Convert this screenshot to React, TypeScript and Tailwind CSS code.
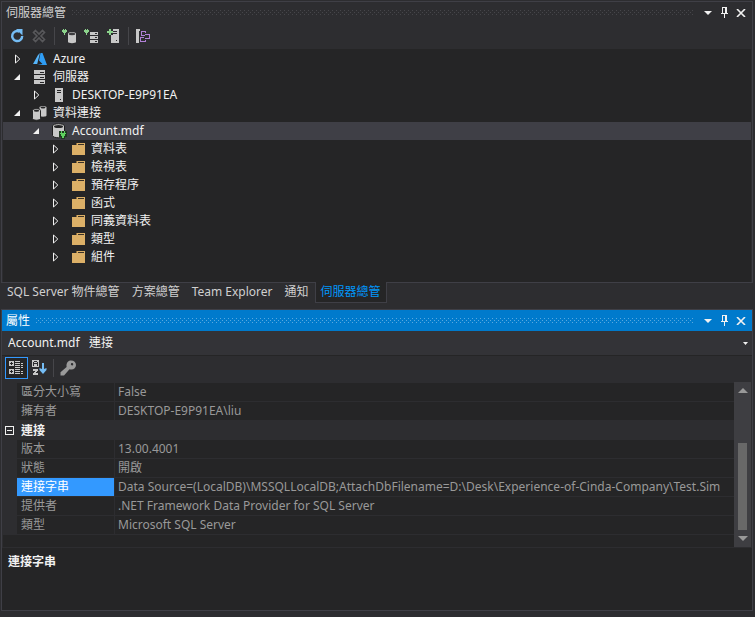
import React, { useState } from "react";

type IconProps = { className?: string };

const Icon = ({ children, className = "" }: { children: React.ReactNode; className?: string }) => (
  <svg viewBox="0 0 16 16" width="16" height="16" className={`shrink-0 ${className}`} aria-hidden="true">
    {children}
  </svg>
);

const RefreshIcon = () => (
  <Icon>
    <path d="M10.500 3.600A5 5 0 1 0 13.200 8" fill="none" stroke="#75bdf5" strokeWidth="2.4" />
    <path d="M7 1h6.500v6.500z" fill="#75bdf5" />
  </Icon>
);

const StopIcon = () => (
  <Icon>
    <path
      d="M4.5 2.5 8 6l3.5-3.5 2 2L10 8l3.5 3.5-2 2L8 10l-3.5 3.5-2-2L6 8 2.5 4.5z"
      fill="none"
      stroke="#58585b"
      strokeWidth="1.6"
    />
  </Icon>
);

const Plug = () => (
  <path d="M1 1h1v1h1V1h1v1h1v2H4v1H3v2H2V5H1V4H0V2h1z" fill="#8bd28b" shapeRendering="crispEdges" />
);

const ConnectDbIcon = () => (
  <Icon>
    <Plug />
    <path d="M6 5.500c0-1.700 8-1.700 8 0v8.500c0 1.500-8 1.500-8 0z" fill="#c8c8c8" />
    <ellipse cx="10" cy="6" rx="3.200" ry="1.200" fill="#3c3c3f" />
  </Icon>
);

const ConnectServerIcon = () => (
  <Icon>
    <Plug />
    <g shapeRendering="crispEdges">
      <path d="M6 4h8v3H6zM6 8h8v3H6zM6 12h8v3H6z" fill="#c8c8c8" />
      <path d="M11 5h2v1h-2zM11 9h2v1h-2zM11 13h2v1h-2z" fill="#2d2d30" />
    </g>
  </Icon>
);

const AddServerIcon = () => (
  <Icon>
    <g shapeRendering="crispEdges">
      <path d="M5 1h8v14H5z" fill="#c8c8c8" />
      <path d="M5 1h2v6H5z" fill="#2d2d30" />
      <path d="M7 3h4v1H7zM7 5h4v1H7zM10 12h1v1h-1z" fill="#2d2d30" />
      <path d="M3 1h2v2h2v2H5v2H3V5H1V3h2z" fill="#8bd28b" />
    </g>
  </Icon>
);

const SchemaIcon = () => (
  <Icon>
    <g shapeRendering="crispEdges">
      <path d="M1 1h4v2H4v12H1z" fill="#c8c8c8" />
      <path
        d="M6 3h5v1H7v3h3v1H6zM10 4h1v1h-1zM10 6h5v5h-5v-1h4V7h-4zM5 9h4v1H6v3h4v-1h1v2H5z"
        fill="#b180d7"
      />
    </g>
  </Icon>
);

const AzureIcon = () => (
  <Icon>
    <path d="M7.500 2h2L14 14H4.500l5-1L6 9.500z" fill="#2f9df4" />
    <path d="M5 4l2-2-2.800 11H0z" fill="#55b5fa" />
  </Icon>
);

const ServersIcon = () => (
  <Icon>
    <g shapeRendering="crispEdges">
      <path d="M1 1h11v4H1zM1 6h11v4H1zM1 11h11v4H1z" fill="#c8c8c8" />
      <path d="M7 3h4v1H7zM7 8h4v1H7zM7 13h4v1H7z" fill="#252526" />
    </g>
  </Icon>
);

const HostIcon = () => (
  <Icon>
    <g shapeRendering="crispEdges">
      <path d="M3 1h8v14H3z" fill="#c8c8c8" />
      <path d="M5 3h4v1H5zM5 5h4v1H5zM8 12h1v1H8z" fill="#252526" />
    </g>
  </Icon>
);

const DatabasesIcon = () => (
  <Icon className="overflow-visible">
    <path d="M6.500 2.500c0-2 7-2 7 0v8c0 1.600-7 1.600-7 0z" fill="#c8c8c8" />
    <ellipse cx="10" cy="2.600" rx="2.500" ry="1" fill="#252526" />
    <path d="M-.5 5.500c0-2.500 8-2.500 8 0v8c0 2.300-8 2.300-8 0z" fill="#c8c8c8" stroke="#252526" />
    <ellipse cx="3.500" cy="5.700" rx="2.700" ry="1" fill="#252526" />
  </Icon>
);

const DatabaseIcon = () => (
  <Icon className="overflow-visible">
    <path d="M.5 3c0-3 12-3 12 0v9.500c0 3-12 3-12 0z" fill="#c8c8c8" stroke="#1e1e1e" />
    <ellipse cx="6.500" cy="3.400" rx="4.500" ry="1.500" fill="#252526" />
    <g shapeRendering="crispEdges">
      <path d="M7 8h8v6h-2v2H9v-2H7z" fill="#1e3a20" />
      <path d="M9 8h1v2h2V8h1v2h1v1h-1v2h-1v2h-2v-2H9v-2H8v-1h1z" fill="#5fd35f" />
    </g>
  </Icon>
);

const FolderIcon = () => (
  <Icon>
    <g shapeRendering="crispEdges">
      <path d="M1 4h4l1-2h8v12H1z" fill="#dcb067" />
      <path d="M7 3h6v1H7z" fill="#3b3226" />
      <path d="M5 2h1v2H5z" fill="#8a6c3c" />
    </g>
  </Icon>
);

const CategorizedIcon = () => (
  <Icon>
    <g shapeRendering="crispEdges">
      <path d="M1 1h5v5H1zM1 9h5v5H1z" fill="#c8c8c8" />
      <path d="M2 3h3v1H2zM3 2h1v3H3zM2 11h3v1H2zM3 10h1v3H3z" fill="#252526" />
      <path
        d="M7 1h5v1H7zM7 3h5v1H7zM7 5h5v1H7zM13 3h2v1h-2zM13 5h2v1h-2zM7 7h5v1H7zM13 7h2v1h-2zM7 9h5v1H7zM7 11h5v1H7zM13 11h2v1h-2zM7 13h5v1H7zM13 13h2v1h-2z"
        fill="#c8c8c8"
      />
    </g>
  </Icon>
);

const SortIcon = () => (
  <Icon>
    <g shapeRendering="crispEdges">
      <path d="M1 0h7v7H1z" fill="#c8c8c8" />
      <path d="M3 1h3v1h1v4H6V4H3v2H2V2h1zM3 2v1h3V2z" fill="#2d2d30" fillRule="evenodd" />
      <path d="M2 9h5v2H6v1H5v1h2v2H2v-2h1v-1h1v-1H2z" fill="#c8c8c8" />
    </g>
    <path d="M11 3h2v6l2.500-1v2L12 14 8.500 10V8l2.500 1z" fill="#75bdf5" />
  </Icon>
);

const KeyIcon = () => (
  <Icon>
    <path
      d="M11 .5c3 0 5 1.800 5 4.500s-2 4.600-4.500 4.600c-.8 0-1.500-.1-2-.4L4 15.500H.5v-3.200L6.600 7C6 3 8 .5 11 .5zm1 2.500a1.200 1.200 0 1 0 .1 2.400A1.200 1.200 0 0 0 12 3z"
      fill="#9a9a9a"
    />
  </Icon>
);

const DownTriangle = ({ className = "" }: IconProps) => (
  <svg viewBox="0 0 8 4" width="8" height="4" className={className} aria-hidden="true">
    <path d="M0 0h8L4 4z" fill="currentColor" />
  </svg>
);

const ScrollTriangle = ({ className = "" }: IconProps) => (
  <svg viewBox="0 0 10 5" width="10" height="5" className={className} aria-hidden="true">
    <path d="M0 0h10L5 5z" fill="currentColor" />
  </svg>
);

const PinIcon = () => (
  <svg viewBox="0 0 7 11" width="7" height="11" shapeRendering="crispEdges" aria-hidden="true">
    <path d="M1 0h5v6h1v1H4v4H3V7H0V6h1zM2 1v5h2V1z" fill="currentColor" fillRule="evenodd" />
  </svg>
);

const CloseIcon = () => (
  <svg viewBox="0 0 10 8" width="10" height="8" aria-hidden="true">
    <path d="M1 0l8 8M9 0L1 8" stroke="currentColor" strokeWidth="1.600" />
  </svg>
);

const Grip = ({ id, color }: { id: string; color: string }) => (
  <svg className="h-[5px] min-w-0 flex-1" shapeRendering="crispEdges" aria-hidden="true">
    <pattern id={id} width="4" height="4" patternUnits="userSpaceOnUse">
      <path d="M0 0h1v1H0zM2 2h1v1H2z" fill={color} />
    </pattern>
    <rect width="100%" height="5" fill={`url(#${id})`} />
  </svg>
);

const TitleBar = ({ id, title, active }: { id: string; title: string; active?: boolean }) => (
  <header
    className={`flex h-[21px] items-center gap-1.5 pl-1 pr-[3px] ${
      active ? "bg-[#007acc] text-white" : "bg-[#2d2d30] text-[#d0d0d0]"
    }`}
  >
    <h2>{title}</h2>
    <Grip id={id} color={active ? "#59a8de" : "#46464a"} />
    <div className="flex items-center text-[#f1f1f1]">
      <button aria-label="視窗位置" className="flex h-4 w-4 items-center justify-center">
        <DownTriangle />
      </button>
      <button aria-label="自動隱藏" className="flex h-4 w-[17px] items-center justify-center">
        <PinIcon />
      </button>
      <button aria-label="關閉" className="flex h-4 w-4 items-center justify-center">
        <CloseIcon />
      </button>
    </div>
  </header>
);

const ToolButton = ({ label, children }: { label: string; children: React.ReactNode }) => (
  <button aria-label={label} className="flex h-[22px] w-[22px] items-center justify-center">
    {children}
  </button>
);

const Separator = () => <span className="mx-1 h-[18px] w-px bg-[#46464a]" />;

const Expander = ({ open, label }: { open: boolean; label: string }) => (
  <button aria-label={label} aria-expanded={open} className="flex h-4 w-4 shrink-0 items-center justify-center">
    <svg viewBox="0 0 8 10" width="8" height="10" aria-hidden="true">
      {open ? (
        <path d="M6 2v6H0z" fill="#f1f1f1" />
      ) : (
        <path d="M1.500 1v8L5.800 5z" fill="none" stroke="#f1f1f1" />
      )}
    </svg>
  </button>
);

const nodes = [
  { level: 1, open: false, icon: <AzureIcon />, text: "Azure" },
  { level: 1, open: true, icon: <ServersIcon />, text: "伺服器" },
  { level: 2, open: false, icon: <HostIcon />, text: "DESKTOP-E9P91EA" },
  { level: 1, open: true, icon: <DatabasesIcon />, text: "資料連接" },
  { level: 2, open: true, icon: <DatabaseIcon />, text: "Account.mdf" },
  ...["資料表", "檢視表", "預存程序", "函式", "同義資料表", "類型", "組件"].map((text) => ({
    level: 3,
    open: false,
    icon: <FolderIcon />,
    text,
  })),
];

const indent: Record<number, string> = { 1: "pl-[7px]", 2: "pl-[26px]", 3: "pl-[45px]" };

const tabs = ["SQL Server 物件總管", "方案總管", "Team Explorer", "通知", "伺服器總管"];

const properties = [
  { name: "區分大小寫", value: "False" },
  { name: "擁有者", value: "DESKTOP-E9P91EA\\liu" },
  { category: "連接" },
  { name: "版本", value: "13.00.4001" },
  { name: "狀態", value: "開啟" },
  {
    name: "連接字串",
    value:
      "Data Source=(LocalDB)\\MSSQLLocalDB;AttachDbFilename=D:\\Desk\\Experience-of-Cinda-Company\\Test.Sim",
  },
  { name: "提供者", value: ".NET Framework Data Provider for SQL Server" },
  { name: "類型", value: "Microsoft SQL Server" },
];

function ServerExplorer() {
  const [selected, setSelected] = useState("Account.mdf");
  return (
    <section className="border border-[#3f3f46]">
      <TitleBar id="grip-explorer" title="伺服器總管" />
      <div className="flex h-[26px] items-center pl-1">
        <ToolButton label="重新整理"><RefreshIcon /></ToolButton>
        <ToolButton label="停止重新整理"><StopIcon /></ToolButton>
        <Separator />
        <ToolButton label="連接到資料庫"><ConnectDbIcon /></ToolButton>
        <ToolButton label="連接到伺服器"><ConnectServerIcon /></ToolButton>
        <ToolButton label="加入伺服器"><AddServerIcon /></ToolButton>
        <span className="mx-[3px] h-[18px] w-px bg-[#46464a]" />
        <ToolButton label="物件檢視"><SchemaIcon /></ToolButton>
      </div>
      <ul role="tree" aria-label="伺服器總管" className="mx-px bg-[#252526] pb-4 pt-px text-[#f1f1f1]">
        {nodes.map((node) => (
          <li
            key={node.text}
            role="treeitem"
            aria-level={node.level}
            aria-selected={selected === node.text}
            onClick={() => setSelected(node.text)}
            className={`flex h-[18px] items-center ${indent[node.level]} ${
              selected === node.text ? "bg-[#3f3f46]" : ""
            }`}
          >
            <Expander open={node.open} label={node.text} />
            <span className="ml-[7px] mr-1 flex">{node.icon}</span>
            <span>{node.text}</span>
          </li>
        ))}
      </ul>
    </section>
  );
}

function ToolTabs() {
  return (
    <div role="tablist" className="-mt-px flex h-[21px]">
      {tabs.map((tab, i) => {
        const active = i === tabs.length - 1;
        return (
          <button
            key={tab}
            role="tab"
            aria-selected={active}
            className={`whitespace-nowrap border border-t-0 px-[5px] pb-px ${
              active ? "border-[#3f3f46] bg-[#252526] text-[#0097fb]" : "border-transparent text-[#d0d0d0]"
            }`}
          >
            {tab}
          </button>
        );
      })}
    </div>
  );
}

function PropertyTable() {
  return (
    <table className="w-full table-fixed border-separate border-spacing-0 text-left">
      <colgroup>
        <col className="w-[14px]" />
        <col className="w-[98px]" />
        <col />
      </colgroup>
      <tbody>
        {properties.map((row, i) =>
          row.category ? (
            <tr key={i} className="h-[19px] bg-[#2d2d30] text-[#f1f1f1]">
              <td className="p-0">
                <button aria-label="摺疊" className="ml-0.5 flex h-[9px] w-[9px] items-center justify-center border border-[#f1f1f1]">
                  <span className="h-px w-[5px] bg-[#f1f1f1]" />
                </button>
              </td>
              <th colSpan={2} className="p-0 pl-1 font-bold leading-[18px]">
                {row.category}
              </th>
            </tr>
          ) : (
            <tr key={i} className="h-[19px] text-[#999999]">
              <td className="bg-[#2d2d30] p-0" />
              <th
                className={`border-b border-r border-[#2d2d30] p-0 pl-1 font-normal leading-[18px] ${
                  row.name === "連接字串" ? "bg-[#3399ff] bg-clip-padding text-white" : ""
                }`}
              >
                {row.name}
              </th>
              <td className="overflow-hidden whitespace-nowrap border-b border-[#2d2d30] p-0 pl-[3px] leading-[18px]">
                {row.value}
              </td>
            </tr>
          ),
        )}
      </tbody>
    </table>
  );
}

function Properties() {
  return (
    <section className="mt-1.5 flex flex-1 flex-col border border-[#3f3f46]">
      <TitleBar id="grip-properties" title="屬性" active />
      <div className="relative border-b border-[#252526] bg-[#333337]">
        <select
          aria-label="物件"
          className="h-6 w-full appearance-none bg-transparent pl-1.5 text-[#f1f1f1] outline-none"
        >
          <option>Account.mdf&nbsp;&nbsp; 連接</option>
        </select>
        <svg viewBox="0 0 5 3" width="5" height="3" className="pointer-events-none absolute right-1 top-[11px]" aria-hidden="true">
          <path d="M0 0h5L2.500 3z" fill="#f1f1f1" />
        </svg>
      </div>
      <div className="flex h-[26px] items-center pl-[3px] pb-0.5">
        <button aria-label="分類" aria-pressed="true" className="flex h-[22px] w-[23px] items-center border border-[#3399ff] bg-[#252526] pl-0.5">
          <CategorizedIcon />
        </button>
        <ToolButton label="字母順序"><SortIcon /></ToolButton>
        <span className="mx-[3px] h-[18px] w-px bg-[#46464a]" />
        <ToolButton label="屬性頁"><KeyIcon /></ToolButton>
      </div>
      <div className="mx-px flex h-[165px] bg-[#252526]">
        <div className="min-w-0 flex-1 overflow-hidden border-t border-[#2d2d30]">
          <PropertyTable />
        </div>
        <div className="flex w-[17px] flex-col items-center bg-[#3e3e42] text-[#999999]">
          <button aria-label="向上捲動" className="flex h-[17px] w-full items-center justify-center">
            <ScrollTriangle className="rotate-180" />
          </button>
          <span className="mt-[44px] w-[9px] flex-1 bg-[#686868]" />
          <button aria-label="向下捲動" className="flex h-[17px] w-full items-center justify-center">
            <ScrollTriangle />
          </button>
        </div>
      </div>
      <div className="flex-1 border-t border-[#2d2d30] bg-[#252526] px-1.5 pb-10 pt-1.5 font-bold text-[#f1f1f1]">
        連接字串
      </div>
    </section>
  );
}

export default function App() {
  return (
    <main className="flex min-h-screen flex-col bg-[#2d2d30] pb-1.5 pl-px pr-0.5 pt-px font-['Noto_Sans','Noto_Sans_CJK_TC',sans-serif] text-[12px] leading-[16px]">
      <ServerExplorer />
      <ToolTabs />
      <Properties />
    </main>
  );
}
